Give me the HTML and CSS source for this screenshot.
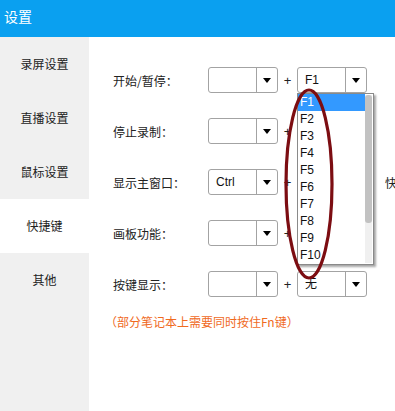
FILE: index.html
```html
<!DOCTYPE html>
<html lang="zh-CN">
<head>
<meta charset="utf-8">
<title>设置</title>
<link rel="stylesheet" href="styles.css">
</head>
<body>
<div class="window">
  <header class="titlebar">设置</header>
  <div class="content">
    <nav class="sidebar">
      <div class="nav-item">录屏设置</div>
      <div class="nav-item">直播设置</div>
      <div class="nav-item">鼠标设置</div>
      <div class="nav-item active">快捷键</div>
      <div class="nav-item">其他</div>
    </nav>
    <main class="main">
      <div class="row">
        <span class="label">开始/暂停：</span>
        <div class="combo"><span class="combo-text"></span><span class="combo-btn"><i class="arrow"></i></span></div>
        <span class="plus">+</span>
        <div class="combo"><span class="combo-text">F1</span><span class="combo-btn"><i class="arrow"></i></span></div>
      </div>
      <div class="row">
        <span class="label">停止录制：</span>
        <div class="combo"><span class="combo-text"></span><span class="combo-btn"><i class="arrow"></i></span></div>
        <span class="plus">+</span>
        <div class="combo"><span class="combo-text"></span><span class="combo-btn"><i class="arrow"></i></span></div>
      </div>
      <div class="row">
        <span class="label">显示主窗口：</span>
        <div class="combo"><span class="combo-text">Ctrl</span><span class="combo-btn"><i class="arrow"></i></span></div>
        <span class="plus">+</span>
        <div class="combo"><span class="combo-text"></span><span class="combo-btn"><i class="arrow"></i></span></div>
        <span class="extra">快捷键提示</span>
      </div>
      <div class="row">
        <span class="label">画板功能：</span>
        <div class="combo"><span class="combo-text"></span><span class="combo-btn"><i class="arrow"></i></span></div>
        <span class="plus">+</span>
        <div class="combo"><span class="combo-text"></span><span class="combo-btn"><i class="arrow"></i></span></div>
      </div>
      <div class="row">
        <span class="label">按键显示：</span>
        <div class="combo"><span class="combo-text"></span><span class="combo-btn"><i class="arrow"></i></span></div>
        <span class="plus">+</span>
        <div class="combo"><span class="combo-text">无</span><span class="combo-btn"><i class="arrow"></i></span></div>
      </div>
      <p class="note">（部分笔记本上需要同时按住Fn键）</p>

      <ul class="dropdown">
        <li class="selected">F1</li>
        <li>F2</li>
        <li>F3</li>
        <li>F4</li>
        <li>F5</li>
        <li>F6</li>
        <li>F7</li>
        <li>F8</li>
        <li>F9</li>
        <li>F10</li>
        <li class="scrollbar"><span class="thumb"></span></li>
      </ul>

      <svg class="circle" width="56" height="200" viewBox="0 0 56 200">
        <ellipse cx="27" cy="98" rx="23" ry="94" fill="none" stroke="#7c0d12" stroke-width="3.2"/>
      </svg>
    </main>
  </div>
</div>
</body>
</html>
```

FILE: styles.css
```css
html, body {
  margin: 0;
  padding: 0;
}
body {
  width: 395px;
  height: 411px;
  overflow: hidden;
  background: #ffffff;
  font-family: "Noto Sans CJK SC", "Liberation Sans", sans-serif;
  color: #1a1a1a;
}
.window {
  display: flex;
  flex-direction: column;
  height: 411px;
}
.titlebar {
  height: 37px;
  background: #0aa0f0;
  color: #ffffff;
  font-size: 14px;
  line-height: 33px;
  padding-left: 4px;
  flex: none;
}
.content {
  display: flex;
  flex: 1;
  min-height: 0;
}
.sidebar {
  width: 89px;
  flex: none;
  background: #f0f0f0;
}
.nav-item {
  height: 54px;
  line-height: 54px;
  text-align: center;
  font-size: 12px;
  color: #222222;
}
.nav-item.active {
  background: #ffffff;
}
.main {
  position: relative;
  flex: 1;
  min-width: 0;
  overflow: hidden;
  padding: 30px 0 0 12px;
  white-space: nowrap;
}
.row {
  display: flex;
  align-items: center;
  height: 26px;
  margin-bottom: 25px;
  padding-left: 12px;
}
.label {
  width: 95px;
  flex: none;
  font-size: 12px;
  color: #222222;
}
.combo {
  width: 68px;
  height: 24px;
  flex: none;
  display: flex;
  border: 1px solid #a3a3a3;
  border-radius: 3px;
  background: #ffffff;
}
.combo-text {
  flex: 1;
  padding-left: 7px;
  font-family: "Liberation Sans", "Noto Sans CJK SC", sans-serif;
  font-size: 12px;
  line-height: 24px;
  color: #111111;
}
.combo-btn {
  width: 20px;
  flex: none;
  border-left: 1px solid #a3a3a3;
  display: flex;
  align-items: center;
  justify-content: center;
}
.arrow {
  width: 0;
  height: 0;
  border-left: 4.5px solid transparent;
  border-right: 4.5px solid transparent;
  border-top: 5px solid #000000;
}
.plus {
  width: 19px;
  flex: none;
  text-align: center;
  font-family: "Liberation Sans", sans-serif;
  font-size: 13px;
  color: #222222;
}
.extra {
  margin-left: 18px;
  font-size: 12px;
  color: #222222;
}
.note {
  margin: -8px 0 0 4px;
  font-size: 12px;
  line-height: 16px;
  color: #f06a1e;
}
.dropdown {
  position: absolute;
  left: 208px;
  top: 56px;
  width: 67px;
  height: 170px;
  margin: 0;
  padding: 0 8px 0 0;
  list-style: none;
  background: #ffffff;
  border: 1px solid #8a8a8a;
  box-shadow: 2px 2px 2px rgba(0, 0, 0, 0.35);
  font-family: "Liberation Sans", sans-serif;
  font-size: 12px;
}
.dropdown li {
  height: 17px;
  line-height: 17px;
  padding-left: 2px;
  color: #111111;
}
.dropdown li.selected {
  background: #3399ff;
  color: #ffffff;
}
.dropdown li.scrollbar {
  position: absolute;
  right: 1px;
  top: 1px;
  bottom: 1px;
  width: 7px;
  height: auto;
  padding: 0;
  background: #f0f0f0;
}
.thumb {
  display: block;
  width: 7px;
  height: 128px;
  background: #c2c2c2;
  border-radius: 3px;
}
.circle {
  position: absolute;
  left: 193px;
  top: 49px;
}
```
